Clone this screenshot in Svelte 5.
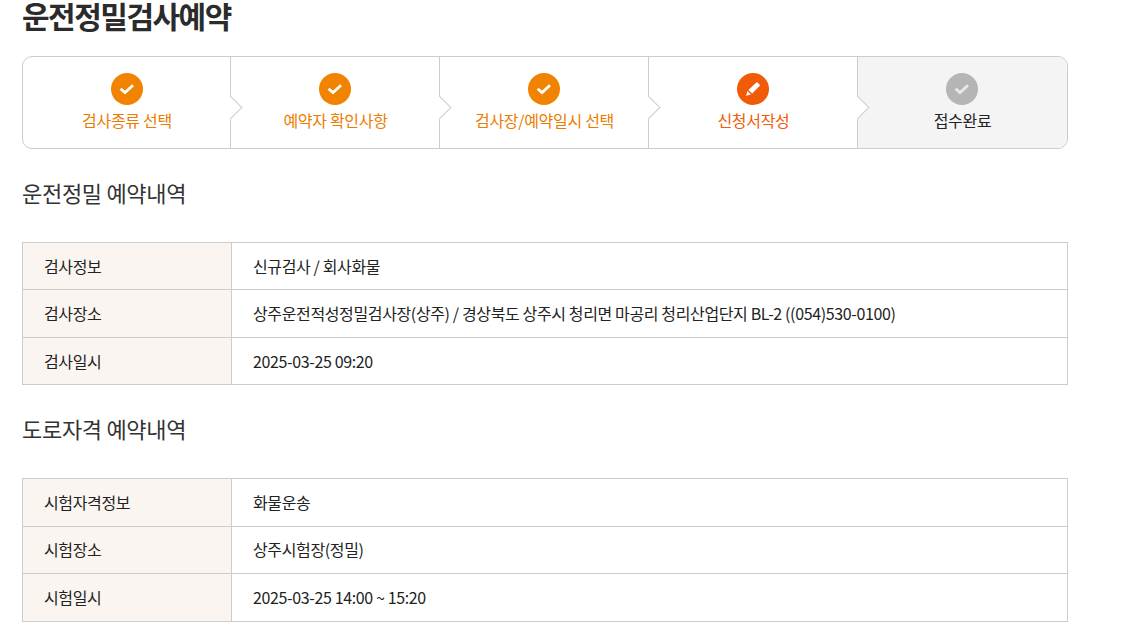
<script>
    const steps = [
        { label: '검사종류 선택', state: 'done' },
        { label: '예약자 확인사항', state: 'done' },
        { label: '검사장/예약일시 선택', state: 'done' },
        { label: '신청서작성', state: 'current' },
        { label: '접수완료', state: 'todo' }
    ];

    const sections = [
        {
            title: '운전정밀 예약내역',
            rows: [
                ['검사정보', '신규검사 / 회사화물'],
                ['검사장소', '상주운전적성정밀검사장(상주) / 경상북도 상주시 청리면 마공리 청리산업단지 BL-2 ((054)530-0100)'],
                ['검사일시', '2025-03-25 09:20']
            ]
        },
        {
            title: '도로자격 예약내역',
            rows: [
                ['시험자격정보', '화물운송'],
                ['시험장소', '상주시험장(정밀)'],
                ['시험일시', '2025-03-25 14:00 ~ 15:20']
            ]
        }
    ];
</script>

<div class="page">
    <h1 class="title">운전정밀검사예약</h1>

    <ol class="steps">
        {#each steps as step, i}
            <li class="step {step.state}">
                <span class="badge">
                    {#if step.state === 'current'}
                        <svg width="16" height="16" viewBox="0 0 16 16">
                            <path d="M11.9 .9 L15.3 4.3 L7.2 12.5 L3.4 9 Z" fill="#fff"/>
                            <path d="M2.5 10 L6 13.4 L1 14.8 Z" fill="#fff"/>
                        </svg>
                    {:else}
                        <svg width="16" height="16" viewBox="0 0 16 16">
                            <path d="M1.6 7.8 L6 11.6 L14 4.2" fill="none" stroke="currentColor" stroke-width="2.8"/>
                        </svg>
                    {/if}
                </span>
                <span class="label">{step.label}</span>
                {#if i < steps.length - 1}
                    <span class="arrow"></span>
                {/if}
            </li>
        {/each}
    </ol>

    {#each sections as section}
        <h2 class="heading">{section.title}</h2>
        <div class="info">
            {#each section.rows as row}
                <div class="row">
                    <div class="key">{row[0]}</div>
                    <div class="value">{row[1]}</div>
                </div>
            {/each}
        </div>
    {/each}
</div>

<style>
    :global(body) {
        background: #fff;
        overflow: hidden;
    }

    .page {
        width: 1046px;
        margin-left: 22px;
        font-family: "Noto Sans CJK KR", "Noto Sans", sans-serif;
        color: #222;
    }

    .title {
        margin: 0;
        height: 30px;
        font-size: 30px;
        line-height: 30px;
        font-weight: 700;
        letter-spacing: -1.5px;
        color: #2b2b2b;
    }

    .steps {
        display: flex;
        margin: 26px 0 0;
        padding: 0;
        height: 93px;
        box-sizing: border-box;
        list-style: none;
        border: 1px solid #ccc;
        border-radius: 10px;
        overflow: hidden;
    }

    .step {
        position: relative;
        width: 209px;
        display: flex;
        flex-direction: column;
        align-items: center;
        padding-top: 16px;
        box-sizing: border-box;
        border-right: 1px solid #ccc;
    }

    .step:first-child {
        width: 208px;
    }

    .step:last-child {
        flex: 1;
        padding-right: 1px;
        border-right: 0;
        background: #f4f4f4;
    }

    .badge {
        width: 32px;
        height: 32px;
        border-radius: 50%;
        display: flex;
        align-items: center;
        justify-content: center;
        color: #fff;
        background: #f28300;
    }

    .current .badge {
        background: #f15a06;
    }

    .todo .badge {
        background: #b5b5b5;
        color: #e8e8e8;
    }

    .label {
        margin-top: 3px;
        margin-left: 1px;
        font-size: 16px;
        line-height: 24px;
        letter-spacing: -0.3px;
        color: #ec7c00;
    }

    .current .label {
        color: #f15a06;
    }

    .todo .label {
        color: #222;
    }

    .arrow {
        position: absolute;
        top: 41.5px;
        right: -9px;
        width: 17px;
        height: 17px;
        box-sizing: border-box;
        background: #fff;
        border-top: 1px solid #ccc;
        border-right: 1px solid #ccc;
        transform: rotate(45deg);
        z-index: 1;
    }

    .heading {
        margin: 28px 0 0;
        height: 30px;
        font-size: 22px;
        line-height: 30px;
        font-weight: 400;
        letter-spacing: -0.3px;
        color: #333;
    }

    .info {
        margin-top: 35px;
        border-bottom: 1px solid #ccc;
        font-size: 16px;
        letter-spacing: -0.37px;
    }

    .row {
        display: flex;
        height: 47.45px;
        box-sizing: border-box;
        border: 1px solid #ccc;
        border-bottom: 0;
    }

    .key,
    .value {
        display: flex;
        align-items: center;
        padding: 0 0 1px 21px;
        color: #222;
    }

    .key {
        width: 209px;
        box-sizing: border-box;
        border-right: 1px solid #ccc;
        background: #faf5f0;
    }
</style>
